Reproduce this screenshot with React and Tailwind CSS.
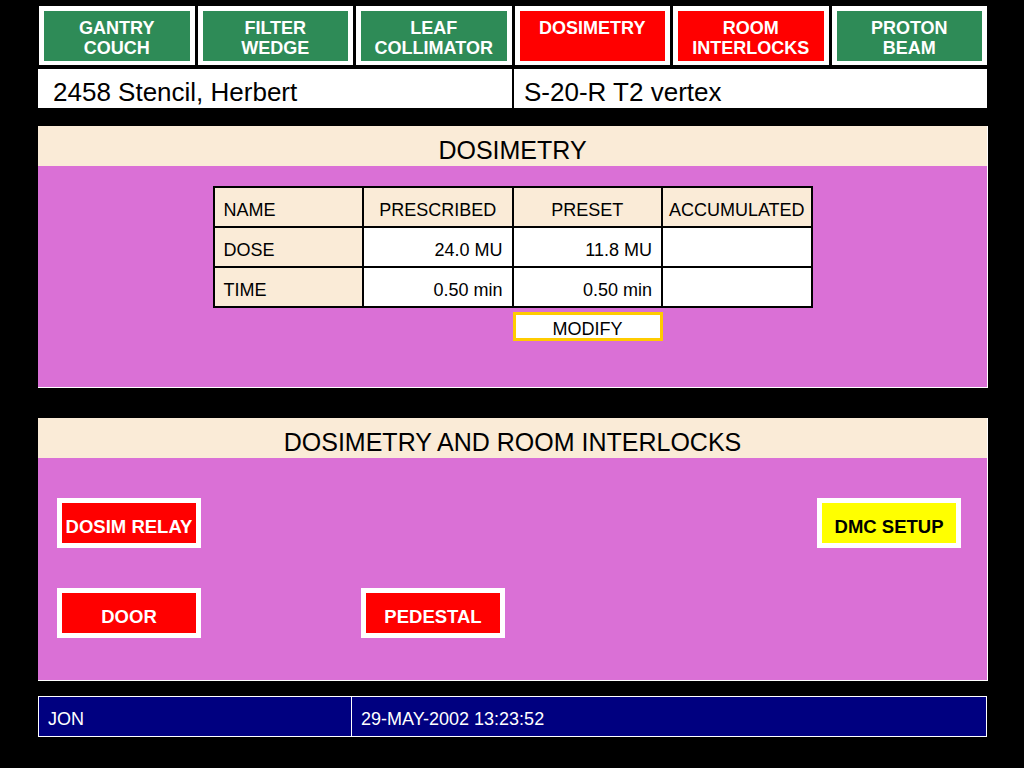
import React from "react";

const topButtons = [
  { lines: ["GANTRY", "COUCH"], red: false },
  { lines: ["FILTER", "WEDGE"], red: false },
  { lines: ["LEAF", "COLLIMATOR"], red: false },
  { lines: ["DOSIMETRY"], red: true },
  { lines: ["ROOM", "INTERLOCKS"], red: true },
  { lines: ["PROTON", "BEAM"], red: false },
];

function TopButton({ lines, red }) {
  return (
    <div
      className={
        "h-[59px] border-t-[5px] border-x-[5px] border-b-[4px] border-white text-white font-bold text-[18px] leading-[20px] text-center pt-[7px] whitespace-nowrap " +
        (red ? "bg-[#ff0000]" : "bg-[#2e8b57]")
      }
    >
      {lines.map((l) => (
        <div key={l}>{l}</div>
      ))}
    </div>
  );
}

function PanelButton({ label, yellow }) {
  return (
    <div
      className={
        "w-[144px] h-[50px] border-[5px] border-white font-bold text-[18.5px] leading-[20px] flex items-center justify-center pt-[7px] whitespace-nowrap " +
        (yellow ? "bg-[#ffff00] text-black" : "bg-[#ff0000] text-white")
      }
    >
      {label}
    </div>
  );
}

function PanelHeader({ title }) {
  return (
    <div className="h-[40px] bg-[#faebd7] text-black text-[25px] leading-[32px] pt-[8px] text-center">
      {title}
    </div>
  );
}

export default function App() {
  const cell = "border-2 border-black h-[40px] text-[18px] leading-[20px] pt-[6px] pb-0 align-middle";
  return (
    <div className="w-[1024px] h-[768px] bg-black font-['Liberation_Sans',Arial,sans-serif] pt-[6px] pl-[38px] overflow-hidden">
      <div className="w-[950px] flex flex-col">
        <div className="grid grid-cols-6 gap-x-[3px] ml-[1px] w-[948px]">
          {topButtons.map((b, i) => (
            <TopButton key={i} {...b} />
          ))}
        </div>

        <div className="mt-[4px] h-[39px] w-[949px] bg-white flex text-black text-[26px] leading-[31px] pt-[8px] overflow-hidden">
          <div className="w-[474px] pl-[15px] whitespace-nowrap">2458 Stencil, Herbert</div>
          <div className="flex-1 border-l-2 border-black -mt-[8px] pt-[8px] pl-[10px] whitespace-nowrap">S-20-R T2 vertex</div>
        </div>

        <div className="mt-[18px] h-[262px] flex flex-col border-r border-b border-white">
          <PanelHeader title="DOSIMETRY" />
          <div className="flex-1 bg-[#da70d6] flex flex-col items-center pt-[20px]">
            <table className="w-[600px] table-fixed border-collapse text-black">
              <tbody>
                <tr className="bg-[#faebd7]">
                  <td className={cell + " text-left pl-[9px]"}>NAME</td>
                  <td className={cell + " text-center"}>PRESCRIBED</td>
                  <td className={cell + " text-center"}>PRESET</td>
                  <td className={cell + " text-center whitespace-nowrap"}>ACCUMULATED</td>
                </tr>
                <tr>
                  <td className={cell + " bg-[#faebd7] text-left pl-[9px]"}>DOSE</td>
                  <td className={cell + " bg-white text-right pr-[9px]"}>24.0 MU</td>
                  <td className={cell + " bg-white text-right pr-[9px]"}>11.8 MU</td>
                  <td className={cell + " bg-white"}></td>
                </tr>
                <tr>
                  <td className={cell + " bg-[#faebd7] text-left pl-[9px]"}>TIME</td>
                  <td className={cell + " bg-white text-right pr-[9px]"}>0.50 min</td>
                  <td className={cell + " bg-white text-right pr-[9px]"}>0.50 min</td>
                  <td className={cell + " bg-white"}></td>
                </tr>
              </tbody>
            </table>
            <div className="grid grid-cols-4 w-[600px] mt-[4px]">
              <div className="col-start-3 h-[29px] border-[3px] border-[#ffcc00] bg-white text-black text-center text-[18px] leading-[18px] pt-[5px] overflow-hidden">
                MODIFY
              </div>
            </div>
          </div>
        </div>

        <div className="mt-[30px] h-[263px] flex flex-col border-r border-b border-white">
          <PanelHeader title="DOSIMETRY AND ROOM INTERLOCKS" />
          <div className="flex-1 bg-[#da70d6] flex flex-col pl-[19px] pr-[26px] pt-[40px] gap-[40px]">
            <div className="flex justify-between">
              <PanelButton label="DOSIM RELAY" />
              <PanelButton label="DMC SETUP" yellow />
            </div>
            <div className="flex gap-[160px]">
              <PanelButton label="DOOR" />
              <PanelButton label="PEDESTAL" />
            </div>
          </div>
        </div>

        <div className="mt-[15px] h-[41px] w-[949px] bg-[#000080] border border-white flex text-white text-[18px] leading-[20px]">
          <div className="w-[313px] border-r border-white pl-[9px] flex items-center pt-[4px]">JON</div>
          <div className="flex-1 pl-[9px] flex items-center pt-[4px] whitespace-nowrap">29-MAY-2002 13:23:52</div>
        </div>
      </div>
    </div>
  );
}
